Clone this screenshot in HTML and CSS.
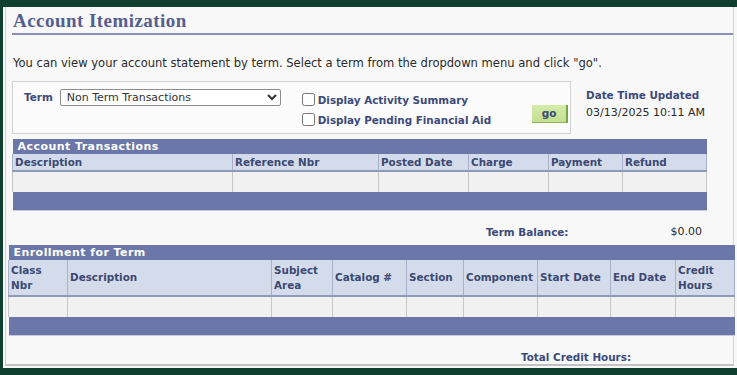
FILE: index.html
```html
<!DOCTYPE html>
<html>
<head>
<meta charset="utf-8">
<link rel="stylesheet" href="styles.css">
</head>
<body>
<div class="panel">
  <div class="frame">
    <h1 class="title">Account Itemization</h1>
    <div class="title-rule"></div>
    <p class="intro">You can view your account statement by term. Select a term from the dropdown menu and click "go".</p>

    <div class="top-row">
      <div class="term-box">
        <div class="term-group">
          <span class="lbl term-lbl">Term</span>
          <select class="term-select"><option>Non Term Transactions</option></select>
        </div>
        <div class="check-group">
          <label class="check-row"><input type="checkbox"><span class="lbl">Display Activity Summary</span></label>
          <label class="check-row"><input type="checkbox"><span class="lbl">Display Pending Financial Aid</span></label>
        </div>
        <button class="go-btn">go</button>
      </div>
      <div class="date-block">
        <div class="lbl">Date Time Updated</div>
        <div class="date-val">03/13/2025 10:11 AM</div>
      </div>
    </div>

    <table class="grid acct">
      <colgroup>
        <col class="c-desc"><col class="c-ref"><col class="c-posted"><col class="c-charge"><col class="c-pay"><col class="c-refund">
      </colgroup>
      <tr><th class="bar" colspan="6">Account Transactions</th></tr>
      <tr class="heads">
        <th>Description</th>
        <th>Reference Nbr</th>
        <th>Posted Date</th>
        <th>Charge</th>
        <th>Payment</th>
        <th>Refund</th>
      </tr>
      <tr class="data"><td></td><td></td><td></td><td></td><td></td><td></td></tr>
      <tr><td class="foot" colspan="6"></td></tr>
    </table>

    <div class="balance-row">
      <span class="lbl bal-lbl">Term Balance:</span>
      <span class="bal-val">$0.00</span>
    </div>

    <table class="grid enroll">
      <colgroup>
        <col class="e-class"><col class="e-desc"><col class="e-subj"><col class="e-cat"><col class="e-sec"><col class="e-comp"><col class="e-start"><col class="e-end"><col class="e-cred">
      </colgroup>
      <tr><th class="bar" colspan="9">Enrollment for Term</th></tr>
      <tr class="heads tall">
        <th>Class<br>Nbr</th>
        <th>Description</th>
        <th>Subject<br>Area</th>
        <th>Catalog #</th>
        <th>Section</th>
        <th>Component</th>
        <th>Start Date</th>
        <th>End Date</th>
        <th>Credit<br>Hours</th>
      </tr>
      <tr class="data"><td></td><td></td><td></td><td></td><td></td><td></td><td></td><td></td><td></td></tr>
      <tr><td class="foot" colspan="9"></td></tr>
    </table>

    <div class="total-row">
      <span class="lbl">Total Credit Hours:</span>
    </div>
  </div>
</div>
</body>
</html>
```

FILE: styles.css
```css
html, body {
  margin: 0;
  padding: 0;
}
body {
  background: #113f2f;
  width: 737px;
  height: 375px;
  overflow: hidden;
  font-family: "DejaVu Sans", Verdana, sans-serif;
  font-size: 11px;
  color: #2a2a2a;
}
.panel {
  margin: 7px 0 0 3px;
  height: 361px;
  background: #f8f8f8;
  padding-left: 2px;
  box-sizing: border-box;
}
.frame {
  width: 729px;
  height: 359px;
  box-sizing: border-box;
  border-left: 1px solid #cfcfcf;
  border-right: 1px solid #d4d4d4;
  border-bottom: 2px solid #c2c2c2;
  display: flex;
  flex-direction: column;
  align-items: flex-start;
}
.title {
  margin: 4px 0 0 7px;
  font-family: "Liberation Serif", "DejaVu Serif", serif;
  font-weight: bold;
  font-size: 19px;
  line-height: 20px;
  color: #555f8e;
  letter-spacing: 0.45px;
}
.title-rule {
  margin: 2px 0 0 6px;
  align-self: stretch;
  height: 2px;
  background: #8b91b3;
}
.intro {
  margin: 21px 0 0 7px;
  line-height: 14px;
  font-size: 11.55px;
}
.lbl {
  font-weight: bold;
  font-size: 10.4px;
  color: #3b4a7a;
}
.top-row {
  margin: 11px 0 0 6px;
  display: flex;
  align-items: flex-start;
  gap: 15px;
}
.term-box {
  width: 559px;
  height: 53px;
  box-sizing: border-box;
  border: 1px solid #d2d2d2;
  background: #fbfbfb;
  display: flex;
  align-items: flex-start;
  padding: 7px 2px 0 11px;
}
.term-group {
  display: flex;
  align-items: center;
  gap: 7px;
  height: 17px;
}
.term-select {
  width: 221px;
  height: 17px;
  font-family: "DejaVu Sans", Verdana, sans-serif;
  font-size: 11px;
  color: #333;
  padding: 0 0 0 2px;
  border: 1px solid #8c8c8c;
  border-radius: 2px;
  background: #fff;
}
.check-group {
  margin-left: 21px;
  margin-top: 1px;
  display: flex;
  flex-direction: column;
}
.check-row {
  display: flex;
  align-items: center;
  height: 20px;
}
.check-row input {
  margin: 0 3px 0 0;
  width: 13px;
  height: 13px;
}
.go-btn {
  margin: 16px 0 0 auto;
  width: 36px;
  height: 18px;
  padding: 0;
  font-family: "DejaVu Sans", Verdana, sans-serif;
  font-size: 10.5px;
  font-weight: bold;
  color: #3b4a7a;
  background: linear-gradient(#d6ebab, #c3df8e);
  border: none;
  border-right: 2px solid #7aa347;
  border-bottom: 1px solid #8fb35c;
}
.date-block {
  margin-top: 5px;
  line-height: 18px;
}
.date-val {
  font-size: 11px;
  color: #2a2a2a;
}

/* grids */
.grid {
  border-collapse: collapse;
  table-layout: fixed;
}
.grid .bar {
  background: #6b77a8;
  color: #ffffff;
  text-align: left;
  font-weight: bold;
  font-size: 11px;
  height: 15px;
  line-height: 13px;
  padding: 0 0 0 5px;
  letter-spacing: 0.45px;
}
.grid .heads th {
  background: #d4dcec;
  color: #3b4872;
  font-weight: bold;
  font-size: 10.4px;
  text-align: left;
  padding: 0 0 0 2px;
  height: 16px;
  line-height: 14px;
  border-left: 1px solid #a7b1cc;
  border-right: 1px solid #a7b1cc;
  border-bottom: 2px solid #8f9abb;
}
.grid .data td {
  background: #f1f1f1;
  height: 20px;
  padding: 0;
  border-left: 1px solid #c6c6c6;
  border-right: 1px solid #c6c6c6;
}
.grid .foot {
  background: #6b77a8;
  height: 18px;
  padding: 0;
  border-bottom: 1px solid #c9ccd8;
}

.acct {
  margin: 5px 0 0 6px;
  width: 694px;
}
.c-desc { width: 220px; }
.c-ref { width: 146px; }
.c-posted { width: 90px; }
.c-charge { width: 80px; }
.c-pay { width: 74px; }
.c-refund { width: 84px; }

.balance-row {
  margin: 14px 0 0 6px;
  width: 694px;
  height: 18px;
  display: flex;
  align-items: center;
  justify-content: flex-end;
}
.bal-lbl {
  margin-right: 102px;
}
.bal-val {
  margin-right: 4px;
}

.enroll {
  margin: 6px 0 0 2px;
  width: 726px;
}
.enroll .heads.tall th {
  height: 35px;
  line-height: 15px;
}
.e-class { width: 59px; }
.e-desc { width: 204px; }
.e-subj { width: 61px; }
.e-cat { width: 74px; }
.e-sec { width: 57px; }
.e-comp { width: 74px; }
.e-start { width: 73px; }
.e-end { width: 65px; }
.e-cred { width: 59px; }

.total-row {
  margin: 14px 0 0 515px;
  height: 14px;
  line-height: 14px;
}
```
